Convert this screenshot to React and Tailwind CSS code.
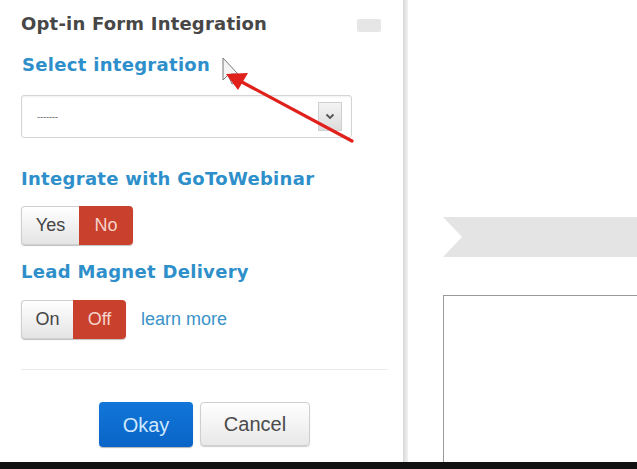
import React from 'react'

const heading = "font-['DejaVu_Sans',sans-serif] font-bold text-[18px] leading-[22px] tracking-[0.3px] text-[#2e8fca]"
const btnFont = "font-['Liberation_Sans',Arial,sans-serif]"

function Toggle({ left, right, leftW, rightW }) {
  return (
    <div className={`inline-flex h-[39px] rounded-[4px] shadow-[0_1px_1px_rgba(0,0,0,0.25)] ${btnFont} text-[18px]`}>
      <div
        className="flex items-center justify-center rounded-l-[4px] border border-r-0 border-[#cfcfcf] bg-gradient-to-b from-white to-[#e4e4e4] text-[#444]"
        style={{ width: leftW }}
      >
        {left}
      </div>
      <div
        className="flex items-center justify-center rounded-r-[4px] bg-[#c9412c] text-[#f6d3cc]"
        style={{ width: rightW }}
      >
        {right}
      </div>
    </div>
  )
}

export default function App() {
  return (
    <div className="relative flex h-[469px] w-[637px] flex-col overflow-hidden bg-white">
      <div className="flex flex-1">
        {/* Settings panel */}
        <div className="flex w-[403px] flex-col pl-[21px] pr-[15px] pt-[13px]">
          <div className="flex items-center justify-between pr-[7px]">
            <h2 className="font-['DejaVu_Sans',sans-serif] text-[18px] font-bold leading-[22px] tracking-[0.2px] text-[#474747]">
              Opt-in Form Integration
            </h2>
            <div className="mt-[2px] h-[13px] w-[24px] rounded-[2px] bg-[#e6e6e6]" />
          </div>

          <h3 className={`${heading} mt-[19px] ml-[1px]`}>Select integration</h3>

          <div className="mt-[19px] flex h-[43px] w-[331px] items-center justify-between rounded-[3px] border border-[#d4d4d4] bg-white pl-[15px] pr-[9px] shadow-[inset_0_1px_2px_rgba(0,0,0,0.06)]">
            <span className="mt-[2px] font-['Liberation_Sans',sans-serif] text-[9px] text-[#555]">-------</span>
            <div className="flex h-[29px] w-[24px] items-center justify-center border border-[#cfcfcf] bg-gradient-to-b from-[#f4f4f4] to-[#dcdcdc]">
              <svg width="10" height="7" viewBox="0 0 10 7">
                <path d="M1.5 1.5 L5 5 L8.5 1.5" fill="none" stroke="#555" strokeWidth="1.8" />
              </svg>
            </div>
          </div>

          <h3 className={`${heading} mt-[30px]`}>Integrate with GoToWebinar</h3>
          <div className="mt-[16px] flex">
            <Toggle left="Yes" right="No" leftW={58} rightW={54} />
          </div>

          <h3 className={`${heading} mt-[16px]`}>Lead Magnet Delivery</h3>
          <div className="mt-[17px] flex items-center">
            <Toggle left="On" right="Off" leftW={52} rightW={53} />
            <a className={`${btnFont} ml-[15px] text-[18px] text-[#3a93c9]`}>learn more</a>
          </div>

          <div className="mt-[30px] h-px w-[367px] bg-[#ebebeb]" />

          <div className={`mt-[32px] flex gap-[7px] pl-[78px] ${btnFont} text-[20px]`}>
            <button className="h-[45px] w-[94px] rounded-[4px] bg-gradient-to-b from-[#1276d8] to-[#0964c7] text-[#cfe8ff] shadow-[0_1px_1px_rgba(0,0,0,0.3)]">
              Okay
            </button>
            <button className="h-[44px] w-[110px] rounded-[4px] border border-[#cfcfcf] bg-gradient-to-b from-white to-[#e8e8e8] text-[#4a4a4a] shadow-[0_1px_1px_rgba(0,0,0,0.2)]">
              Cancel
            </button>
          </div>
        </div>

        {/* Panel edge */}
        <div className="w-[5px] bg-gradient-to-r from-[#d8d8d8] to-[#f2f2f2]" />

        {/* Canvas preview */}
        <div className="flex flex-1 flex-col pl-[35px] pt-[217px]">
          <svg className="block" width="194" height="40" viewBox="0 0 194 40">
            <polygon points="0,0 194,0 194,40 0,40 19,20" fill="#e4e4e4" />
          </svg>
          <div className="mt-[38px] flex-1 border-l border-t border-[#9a9a9a]" />
        </div>
      </div>

      <div className="h-[7px] bg-[#111]" />

      {/* Cursor and annotation arrow */}
      <svg className="pointer-events-none absolute left-0 top-0" width="637" height="469">
        <path d="M223 58 L223 80 L228 75 L232 84 L235 83 L231 74 L238 74 Z" fill="#f4f4f4" stroke="#777" strokeWidth="1" />
        <line x1="352" y1="141" x2="240" y2="81" stroke="#e0201b" strokeWidth="3.2" strokeLinecap="round" />
        <polygon points="226,74 248,73 238,90" fill="#e0201b" />
      </svg>
    </div>
  )
}
